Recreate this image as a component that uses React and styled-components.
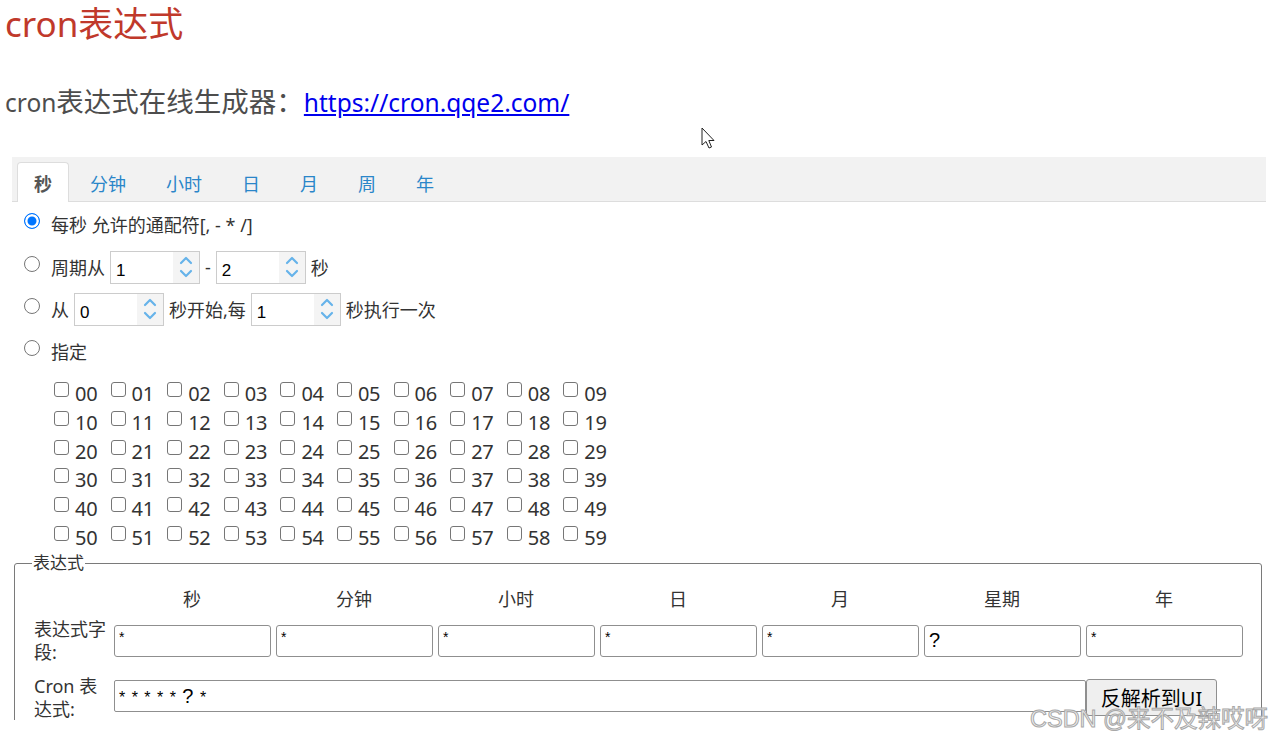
import React from 'react';
import styled, { createGlobalStyle } from 'styled-components';

const GlobalStyle = createGlobalStyle`
    html, body {
        margin: 0;
        padding: 0;
        background: #fff;
    }
    body {
        font-family: "Noto Sans", "Noto Sans CJK SC", sans-serif;
        color: #333;
    }
`;

const Page = styled.div`
    position: relative;
    width: 1274px;
    height: 737px;
    overflow: hidden;
`;

const Clip = styled.div`
    height: 720px;
    overflow: hidden;
`;

const Title = styled.h1`
    margin: 0;
    padding-left: 5px;
    height: 50px;
    line-height: 48px;
    font-size: 35px;
    font-weight: 400;
    color: #c0392b;
`;

const Sub = styled.p`
    margin: 34px 0 0;
    padding-left: 5px;
    height: 36px;
    line-height: 36px;
    font-size: 24.5px;
    color: #4d4d4d;

    span {
        font-size: 27.5px;
    }
    a {
        margin-left: 0;
        color: #0000ee;
        text-decoration: underline;
    }
`;

const Panel = styled.div`
    margin: 37px 0 0 12px;
    width: 1254px;
`;

const TabBar = styled.div`
    display: flex;
    align-items: flex-end;
    height: 45px;
    padding-left: 5px;
    background: #f2f2f2;
    border-bottom: 1px solid #ddd;
    box-sizing: border-box;
`;

const Tab = styled.div`
    height: ${p => (p.$active ? '40px' : '39px')};
    margin-bottom: ${p => (p.$active ? '-1px' : '0')};
    padding: 0 ${p => (p.$active ? '16px' : '19px')};
    margin-right: ${p => (p.$active ? '1px' : '0')};
    line-height: 42px;
    font-size: 18px;
    color: ${p => (p.$active ? '#555' : '#2a86c9')};
    font-weight: ${p => (p.$active ? 700 : 400)};
    background: ${p => (p.$active ? '#fff' : 'transparent')};
    border: ${p => (p.$active ? '1px solid #ddd' : '1px solid transparent')};
    border-bottom: none;
    border-radius: 4px 4px 0 0;
    box-sizing: border-box;
`;

const Options = styled.div`
    padding-left: 12px;
`;

const Row = styled.div`
    display: flex;
    align-items: center;
    height: ${p => p.$h || 42}px;
    font-size: 18px;
    color: #333;
    gap: 5px;
`;

const Radio = styled.span`
    width: 16px;
    height: 16px;
    border-radius: 50%;
    box-sizing: border-box;
    margin: -6px 6px 0 0;
    border: ${p => (p.$checked ? '1px solid #0075ff' : '1px solid #767676')};
    background: ${p => (p.$checked ? '#0075ff' : '#fff')};
    box-shadow: ${p => (p.$checked ? 'inset 0 0 0 2.5px #fff' : 'none')};
    flex: none;
`;

const Spin = styled.div`
    display: flex;
    width: 90px;
    height: 33px;
    border: 1px solid #ccc;
    box-sizing: border-box;
    background: #fff;
`;

const SpinValue = styled.span`
    flex: 1;
    padding: 9px 0 0 5px;
    font-family: "Liberation Sans", Arial, sans-serif;
    font-size: 17px;
    color: #000;
`;

const SpinBtns = styled.span`
    width: 26px;
    background: #f4f4f4;
    display: flex;
    align-items: center;
    justify-content: center;
`;

const Grid = styled.div`
    display: grid;
    grid-template-columns: repeat(10, 56.6px);
    grid-auto-rows: 28.7px;
    margin: 6px 0 0 30px;
`;

const Check = styled.label`
    display: flex;
    align-items: center;
    gap: 6px;
    font-size: 20px;
    color: #333;

    span.box {
        width: 15px;
        height: 15px;
        border: 1px solid #767676;
        border-radius: 3px;
        box-sizing: border-box;
        margin-top: -5px;
    }
    span.num {
        margin-top: 3px;
        letter-spacing: -0.3px;
    }
`;

const Fieldset = styled.fieldset`
    margin: 3px 0 0 14px;
    width: 1248px;
    height: 190px;
    padding: 10px 0 0 19px;
    border: 1.5px solid #7a7a7a;
    border-radius: 3px;
    box-sizing: border-box;

    legend {
        padding: 0 1px;
        margin-left: -2px;
        font-size: 17px;
        color: #333;
        line-height: 20px;
    }
`;

const Table = styled.div`
    display: grid;
    grid-template-columns: 80px repeat(7, 162px);
    grid-template-rows: 30px 56px 58px;
    align-items: center;
    font-size: 18px;
    color: #333;
`;

const Head = styled.div`
    text-align: center;
    padding-right: 6px;
`;

const Label = styled.div`
    line-height: 23px;
    width: 74px;
`;

const Field = styled.div`
    width: 157px;
    height: 32px;
    border: 1px solid #8f8f8f;
    border-radius: 3px;
    box-sizing: border-box;
    padding: 3px 4px 0;
    font-family: "Liberation Sans", Arial, sans-serif;
    font-size: ${p => (p.$big ? 20 : 14)}px;
    color: #000;
`;

const CronRow = styled.div`
    grid-column: 2 / span 7;
    display: flex;
    align-items: flex-start;
`;

const CronInput = styled.div`
    width: 972px;
    height: 32px;
    border: 1px solid #8f8f8f;
    border-radius: 2px;
    box-sizing: border-box;
    padding: 4px 4px 0;
    font-family: "Liberation Sans", Arial, sans-serif;
    font-size: 16px;
    word-spacing: 2px;
    color: #000;

    b {
        font-weight: 400;
        font-size: 20px;
    }
`;

const Button = styled.button`
    width: 131px;
    height: 37px;
    margin-top: -1px;
    background: #efefef;
    border: 1px solid #8f8f8f;
    border-radius: 3px;
    font-family: "Noto Sans", "Noto Sans CJK SC", sans-serif;
    font-size: 20px;
    color: #000;
    padding: 0;
`;

const Watermark = styled.div`
    position: absolute;
    left: 1030px;
    top: 700px;
    font-family: "Liberation Sans", "Noto Sans CJK SC", sans-serif;
    font-size: 23.5px;
    color: rgba(240, 240, 240, 0.85);
    -webkit-text-stroke: 1px #a8a8a8;
`;

const Cursor = styled.svg`
    position: absolute;
    left: 701px;
    top: 127px;
`;

const Chevrons = () => (
    <svg width="16" height="26" viewBox="0 0 16 26">
        <path d="M3 9 L8 4 L13 9" fill="none" stroke="#66b3ea" strokeWidth="2.2" strokeLinecap="round" strokeLinejoin="round" />
        <path d="M3 17 L8 22 L13 17" fill="none" stroke="#66b3ea" strokeWidth="2.2" strokeLinecap="round" strokeLinejoin="round" />
    </svg>
);

const SpinBox = ({ value }) => (
    <Spin>
        <SpinValue>{value}</SpinValue>
        <SpinBtns><Chevrons /></SpinBtns>
    </Spin>
);

const App = () => {
    const tabs = ['秒', '分钟', '小时', '日', '月', '周', '年'];
    const heads = ['秒', '分钟', '小时', '日', '月', '星期', '年'];
    const values = ['*', '*', '*', '*', '*', '?', '*'];
    const nums = Array.from({ length: 60 }, (_, i) => String(i).padStart(2, '0'));

    return (
        <Page>
            <GlobalStyle />
            <Clip>
                <Title>cron表达式</Title>
                <Sub>cron<span>表达式在线生成器：</span><a href="#">https://cron.qqe2.com/</a></Sub>

                <Panel>
                    <TabBar>
                        {tabs.map((t, i) => <Tab key={t} $active={i === 0}>{t}</Tab>)}
                    </TabBar>
                    <Options>
                        <Row $h={44}><Radio $checked />每秒 允许的通配符[, - * /]</Row>
                        <Row>
                            <Radio />周期从<SpinBox value="1" /><span>-</span><SpinBox value="2" />秒
                        </Row>
                        <Row>
                            <Radio />从<SpinBox value="0" />秒开始,每<SpinBox value="1" />秒执行一次
                        </Row>
                        <Row><Radio />指定</Row>
                        <Grid>
                            {nums.map(n => (
                                <Check key={n}><span className="box" /><span className="num">{n}</span></Check>
                            ))}
                        </Grid>
                    </Options>
                </Panel>

                <Fieldset>
                    <legend>表达式</legend>
                    <Table>
                        <div />
                        {heads.map(h => <Head key={h}>{h}</Head>)}
                        <Label>表达式字段:</Label>
                        {values.map((v, i) => <Field key={i} $big={v === '?'}>{v}</Field>)}
                        <Label>Cron 表达式:</Label>
                        <CronRow>
                            <CronInput>* * * * * <b>?</b> *</CronInput>
                            <Button>反解析到UI</Button>
                        </CronRow>
                    </Table>
                </Fieldset>
            </Clip>

            <Cursor width="16" height="26" viewBox="0 0 16 26">
                <path d="M1 1 L1 18 L5 14.5 L8 21 L10.5 20 L7.8 13.5 L13 13.5 Z" fill="#fff" stroke="#222" strokeWidth="1" strokeLinejoin="round" />
            </Cursor>
            <Watermark>CSDN @来不及辣哎呀</Watermark>
        </Page>
    );
};

export default App;
